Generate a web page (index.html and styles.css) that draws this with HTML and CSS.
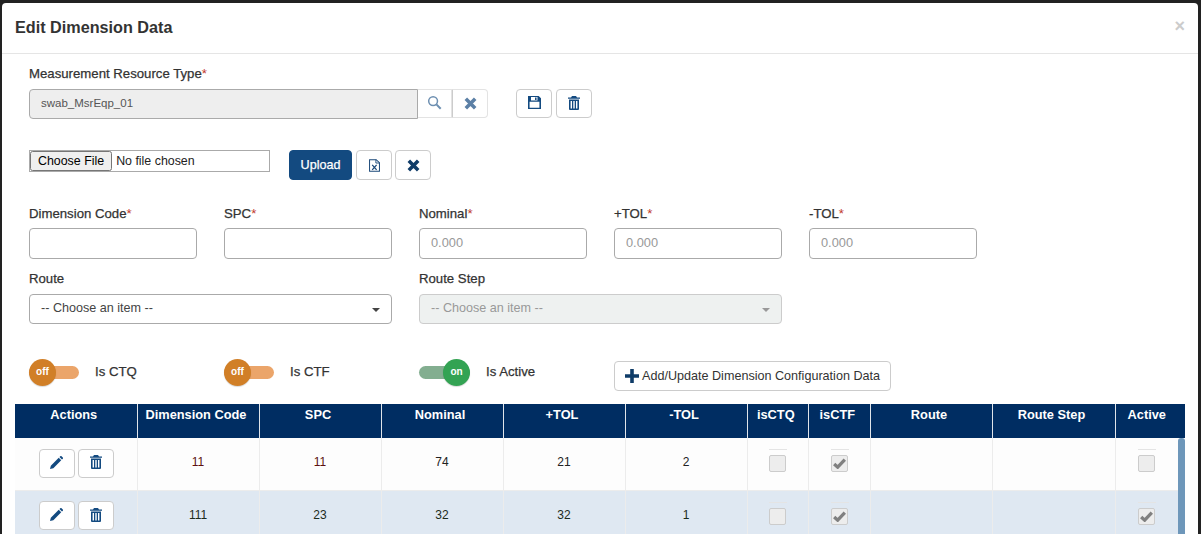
FILE: index.html
```html
<!DOCTYPE html>
<html lang="en">
<head>
<meta charset="UTF-8">
<title>Edit Dimension Data</title>
<link rel="stylesheet" href="styles.css">
</head>
<body>
<svg class="icon-defs" width="0" height="0">
    <symbol id="i-search" viewBox="0 0 16 16"><circle cx="6.5" cy="6.5" r="4.7" fill="none" stroke="currentColor" stroke-width="1.6"/><path d="M10 10l4.6 4.6" fill="none" stroke="currentColor" stroke-width="2.2"/></symbol>
    <symbol id="i-times" viewBox="0 0 16 16"><path d="M3 3l10 10M13 3L3 13" fill="none" stroke="currentColor" stroke-width="3.8"/></symbol>
    <symbol id="i-save" viewBox="0 0 14 14"><path fill-rule="evenodd" fill="currentColor" d="M0 0h11.500l2.500 2.500V14H0zM3.200 1.100v3.700h7V1.100zM7.600 1.500h1.600v2.800H7.600zM1.700 6.300v6.400h10.600V6.300z"/></symbol>
    <symbol id="i-trash" viewBox="0 0 12 14"><path fill-rule="evenodd" fill="currentColor" d="M4 0h4l1 1.500h3v1.300H0V1.500h3zM1 3.600h10V13a1 1 0 0 1-1 1H2a1 1 0 0 1-1-1zM2.600 5v7.600h1.400V5zM5.300 5v7.600h1.400V5zM8 5v7.600h1.400V5z"/></symbol>
    <symbol id="i-excel" viewBox="0 0 12 14"><path d="M.6.600h7.200l3.600 3.400v9.400H.6z" fill="none" stroke="currentColor" stroke-width="1.100"/><path d="M7.500.600v3.700h3.900" fill="none" stroke="currentColor" stroke-width="1"/><path d="M3.500 6.300l4.800 5.500M8.300 6.300l-4.800 5.500" fill="none" stroke="currentColor" stroke-width="1.400"/></symbol>
    <symbol id="i-pencil" viewBox="0 0 14 14"><path fill="currentColor" d="M0 14l.9-3.600L9.400 1.900l2.700 2.700-8.500 8.500zM10.200 1.100l.9-.9a1 1 0 0 1 1.300 0l1.400 1.400a1 1 0 0 1 0 1.300l-.9.9z"/></symbol>
    <symbol id="i-plus" viewBox="0 0 14 14"><path d="M7 0v14M0 7h14" fill="none" stroke="currentColor" stroke-width="3.600"/></symbol>
    <symbol id="i-check" viewBox="0 0 14 12"><path d="M1.200 6.500l3.800 3.500 7.800-8.200" fill="none" stroke="currentColor" stroke-width="3.600"/></symbol>
</svg>

<div class="modal">
    <div class="modal-header">
        <h4 class="modal-title">Edit Dimension Data</h4>
        <span class="modal-close">&times;</span>
    </div>
    <div class="modal-body">
        <label class="field-label">Measurement Resource Type<span class="req">*</span></label>
        <div class="resource-row">
            <div class="lookup-input">swab_MsrEqp_01</div>
            <button class="btn btn-addon"><svg class="ic-search"><use href="#i-search"/></svg></button>
            <button class="btn btn-addon btn-addon-last"><svg class="ic-times faded"><use href="#i-times"/></svg></button>
            <button class="btn btn-icon btn-save"><svg class="ic-save"><use href="#i-save"/></svg></button>
            <button class="btn btn-icon"><svg class="ic-trash"><use href="#i-trash"/></svg></button>
        </div>

        <div class="upload-row">
            <input type="file" class="file-input">
            <button class="btn btn-upload">Upload</button>
            <button class="btn btn-icon btn-excel"><svg class="ic-excel"><use href="#i-excel"/></svg></button>
            <button class="btn btn-icon btn-clear"><svg class="ic-times"><use href="#i-times"/></svg></button>
        </div>

        <div class="form-row row-numbers">
            <div class="form-col"><label class="field-label">Dimension Code<span class="req">*</span></label><input class="text-input" type="text"></div>
            <div class="form-col"><label class="field-label">SPC<span class="req">*</span></label><input class="text-input" type="text"></div>
            <div class="form-col"><label class="field-label">Nominal<span class="req">*</span></label><input class="text-input" type="text" placeholder="0.000"></div>
            <div class="form-col"><label class="field-label">+TOL<span class="req">*</span></label><input class="text-input" type="text" placeholder="0.000"></div>
            <div class="form-col"><label class="field-label">-TOL<span class="req">*</span></label><input class="text-input" type="text" placeholder="0.000"></div>
        </div>

        <div class="form-row row-routes">
            <div class="form-col form-col-wide">
                <label class="field-label">Route</label>
                <div class="select-box"><span>-- Choose an item --</span><i class="caret"></i></div>
            </div>
            <div class="form-col form-col-wide">
                <label class="field-label">Route Step</label>
                <div class="select-box select-disabled"><span>-- Choose an item --</span><i class="caret"></i></div>
            </div>
        </div>

        <div class="toggle-row">
            <div class="toggle-item"><span class="toggle"><span class="knob">off</span></span><span class="toggle-label">Is CTQ</span></div>
            <div class="toggle-item"><span class="toggle"><span class="knob">off</span></span><span class="toggle-label">Is CTF</span></div>
            <div class="toggle-item"><span class="toggle toggle-on"><span class="knob">on</span></span><span class="toggle-label">Is Active</span></div>
            <button class="btn btn-add"><svg class="ic-plus"><use href="#i-plus"/></svg>Add/Update Dimension Configuration Data</button>
        </div>
    </div>

    <div class="grid-wrap">
        <table class="grid">
            <colgroup>
                <col class="c-std"><col class="c-std"><col class="c-std"><col class="c-std"><col class="c-std"><col class="c-std">
                <col class="c-small"><col class="c-small"><col class="c-std"><col class="c-route"><col>
            </colgroup>
            <thead>
                <tr>
                    <th>Actions</th><th>Dimension Code</th><th>SPC</th><th>Nominal</th><th>+TOL</th><th>-TOL</th>
                    <th>isCTQ</th><th>isCTF</th><th>Route</th><th>Route Step</th><th>Active</th>
                </tr>
            </thead>
            <tbody>
                <tr>
                    <td><div class="row-actions"><button class="btn btn-row"><svg class="ic-pencil"><use href="#i-pencil"/></svg></button><button class="btn btn-row"><svg class="ic-trash"><use href="#i-trash"/></svg></button></div></td>
                    <td class="val-red">11</td><td class="val-red">11</td><td>74</td><td>21</td><td>2</td>
                    <td><span class="check"></span></td>
                    <td><span class="check"><svg class="ic-check"><use href="#i-check"/></svg></span></td>
                    <td></td><td></td>
                    <td><span class="check"></span></td>
                </tr>
                <tr class="alt">
                    <td><div class="row-actions"><button class="btn btn-row"><svg class="ic-pencil"><use href="#i-pencil"/></svg></button><button class="btn btn-row"><svg class="ic-trash"><use href="#i-trash"/></svg></button></div></td>
                    <td>111</td><td>23</td><td>32</td><td>32</td><td>1</td>
                    <td><span class="check"></span></td>
                    <td><span class="check"><svg class="ic-check"><use href="#i-check"/></svg></span></td>
                    <td></td><td></td>
                    <td><span class="check"><svg class="ic-check"><use href="#i-check"/></svg></span></td>
                </tr>
            </tbody>
        </table>
        <div class="scroll-thumb"></div>
    </div>
</div>
</body>
</html>
```

FILE: styles.css
```css
html, body {
    margin: 0;
    padding: 0;
    height: 534px;
    overflow: hidden;
}
body {
    background-color: #222;
    font-family: "Liberation Sans", Arial, sans-serif;
    font-size: 12px;
    color: #333;
    padding: 3px 3px 0 2px;
    box-sizing: border-box;
}
.icon-defs {
    position: absolute;
}
.modal {
    background-color: #fff;
    border-radius: 4px 4px 0 0;
    height: 531px;
    overflow: hidden;
}
.modal-header {
    height: 51px;
    border-bottom: 1px solid #e5e5e5;
    display: flex;
    align-items: center;
    justify-content: space-between;
    padding: 0 15px 2px 13px;
    box-sizing: border-box;
}
.modal-title {
    margin: 0;
    font-size: 16.2px;
    font-weight: bold;
    color: #333;
}
.modal-close {
    font-size: 18px;
    font-weight: bold;
    color: #ccc;
    margin-top: -1px;
    margin-right: -2px;
}
.modal-body {
    padding: 13px 0 0 27px;
}
.field-label {
    display: block;
    font-size: 13.2px;
    -webkit-text-stroke: 0.25px #333;
    line-height: 14px;
    color: #333;
}
.req {
    color: #c0392b;
    -webkit-text-stroke: 0;
}
.btn {
    background-color: #fff;
    border: 1px solid #ccc;
    border-radius: 4px;
    padding: 0;
    display: inline-flex;
    align-items: center;
    justify-content: center;
    box-sizing: border-box;
    font-family: inherit;
    color: #333;
}
.resource-row {
    display: flex;
    margin-top: 8px;
}
.lookup-input {
    width: 389px;
    height: 30px;
    box-sizing: border-box;
    background-color: #eee;
    border: 1px solid #aaa;
    border-radius: 4px 0 0 4px;
    padding-left: 11px;
    line-height: 27px;
    font-size: 11.5px;
    color: #555;
}
.btn-addon {
    width: 34px;
    height: 29px;
    border-color: #e3e3e3;
    border-left: 0;
    border-radius: 0;
}
.btn-addon-last {
    width: 36px;
    border-left: 1px solid #ccc;
    border-radius: 0 4px 4px 0;
}
.btn-icon {
    width: 36px;
    height: 29px;
}
.btn-save {
    margin-left: 28px;
    margin-right: 4px;
}
.ic-search {
    width: 15px;
    height: 15px;
    margin-top: -2px;
    color: #6d8fb1;
}
.ic-times {
    width: 15px;
    height: 15px;
    color: #0f3c68;
}
.ic-times.faded {
    color: #5c80a6;
}
.ic-save {
    width: 13px;
    height: 13px;
    margin-top: -3px;
    color: #134a80;
}
.ic-trash {
    width: 12px;
    height: 14px;
    margin-top: -2px;
    color: #134a80;
}
.ic-excel {
    width: 11px;
    height: 13px;
    color: #1d4a7a;
}
.ic-pencil {
    width: 13px;
    height: 13px;
    margin-top: -2px;
    color: #134a80;
}
.ic-plus {
    width: 14px;
    height: 14px;
    color: #0f3c68;
    margin-right: 3px;
}
.ic-check {
    display: block;
    width: 13px;
    height: 11px;
    margin: 2px 1px;
    color: #808080;
}
.upload-row {
    display: flex;
    margin-top: 31px;
}
.file-input {
    width: 241px;
    height: 22px;
    box-sizing: border-box;
    border: 1px solid #aaa;
    font-family: inherit;
    font-size: 12.4px;
    background-color: #fff;
    color: #222;
}
.btn-upload {
    width: 63px;
    height: 30px;
    margin-left: 19px;
    background-color: #134a80;
    border-color: #134a80;
    color: #fff;
    font-size: 12.6px;
    -webkit-text-stroke: 0.25px #fff;
}
.btn-excel {
    width: 36px;
    height: 30px;
    margin-left: 4px;
}
.btn-clear {
    width: 36px;
    height: 30px;
    margin-left: 3px;
}
.form-row {
    display: flex;
    gap: 27px;
}
.form-col {
    width: 168px;
}
.form-col-wide {
    width: 363px;
}
.row-numbers {
    margin-top: 27px;
}
.row-routes {
    margin-top: 13px;
}
.text-input {
    display: block;
    width: 100%;
    height: 31px;
    margin-top: 7px;
    box-sizing: border-box;
    border: 1px solid #aaa;
    border-radius: 4px;
    padding: 0 11px 2px;
    font-family: inherit;
    font-size: 12.8px;
}
.text-input::placeholder {
    color: #999;
}
.select-box {
    height: 30px;
    margin-top: 8px;
    box-sizing: border-box;
    border: 1px solid #aaa;
    border-radius: 4px;
    padding: 0 12px 2px 11px;
    display: flex;
    align-items: center;
    justify-content: space-between;
    font-size: 12.6px;
    color: #444;
}
.select-disabled {
    background-color: #eef1f0;
    border-color: #ccc;
    color: #999;
}
.caret {
    border-left: 4px solid transparent;
    border-right: 4px solid transparent;
    border-top: 4px solid #444;
    margin-top: 4px;
    margin-right: -1px;
}
.select-disabled .caret {
    border-top-color: #999;
}
.toggle-row {
    display: flex;
    align-items: flex-start;
    margin-top: 35px;
    height: 45px;
}
.toggle-item {
    width: 195px;
    display: flex;
    align-items: center;
    height: 27px;
}
.toggle {
    width: 50px;
    height: 13px;
    background-color: #eba56a;
    border-radius: 7px;
    display: flex;
    align-items: center;
}
.knob {
    width: 27px;
    height: 27px;
    flex-shrink: 0;
    border-radius: 50%;
    background-color: #d17f27;
    box-shadow: 0 1px 1px rgba(0, 0, 0, 0.15);
    color: #fff;
    font-size: 10px;
    font-weight: bold;
    text-align: center;
    line-height: 26px;
}
.toggle-on {
    width: 51px;
    justify-content: flex-end;
    background-color: #83ae90;
}
.toggle-on .knob {
    background-color: #33a353;
}
.toggle-label {
    margin-left: 16px;
    margin-top: -2px;
    font-size: 13.2px;
    -webkit-text-stroke: 0.25px #333;
}
.btn-add {
    width: 277px;
    height: 30px;
    margin-top: 2px;
    font-size: 12.6px;
}
.grid-wrap {
    position: relative;
    margin-left: 13px;
    width: 1170px;
}
.grid {
    width: 1170px;
    table-layout: fixed;
    border-collapse: collapse;
}
.c-std {
    width: 122px;
}
.c-small {
    width: 61.5px;
}
.c-route {
    width: 123px;
}
.grid th {
    height: 34px;
    padding: 4px 4px 0 0;
    box-sizing: border-box;
    vertical-align: top;
    background-color: #002d62;
    color: #fff;
    font-size: 12.8px;
    font-weight: bold;
    line-height: 14px;
    border-left: 1px solid #dfe4ea;
}
.grid th:first-child {
    border-left: 0;
}
.grid th:last-child {
    padding-right: 7px;
}
.grid td {
    height: 52px;
    box-sizing: border-box;
    padding: 0 0 3px;
    text-align: center;
    vertical-align: middle;
    color: #222;
    background-color: #fdfdfd;
    border-left: 1px solid #ececec;
    border-bottom: 1px solid #ececec;
}
.grid td:first-child {
    border-left: 0;
}
.grid td:last-child {
    padding-right: 7px;
}
.grid td.val-red {
    color: #5c1010;
}
.grid .alt td {
    color: #1c2b1c;
    background-color: #dfe8f2;
    border-bottom: 0;
}
.row-actions {
    display: flex;
    justify-content: center;
    gap: 3px;
    margin-top: 2px;
    padding-left: 1px;
}
.btn-row {
    width: 36px;
    height: 29px;
}
.check {
    display: block;
    position: relative;
    width: 17px;
    height: 17px;
    margin: 3px auto 0;
    box-sizing: border-box;
    background-color: #ededed;
    border: 1px solid #ccc;
    border-radius: 2px;
}
.check::before {
    content: "";
    position: absolute;
    left: -1px;
    top: -7px;
    width: 18px;
    border-top: 1px solid #e4e4e4;
}
.scroll-thumb {
    position: absolute;
    right: 0;
    top: 34px;
    bottom: 0;
    width: 7px;
    background-color: #6e97ba;
    border-radius: 3px 3px 0 0;
}
```
